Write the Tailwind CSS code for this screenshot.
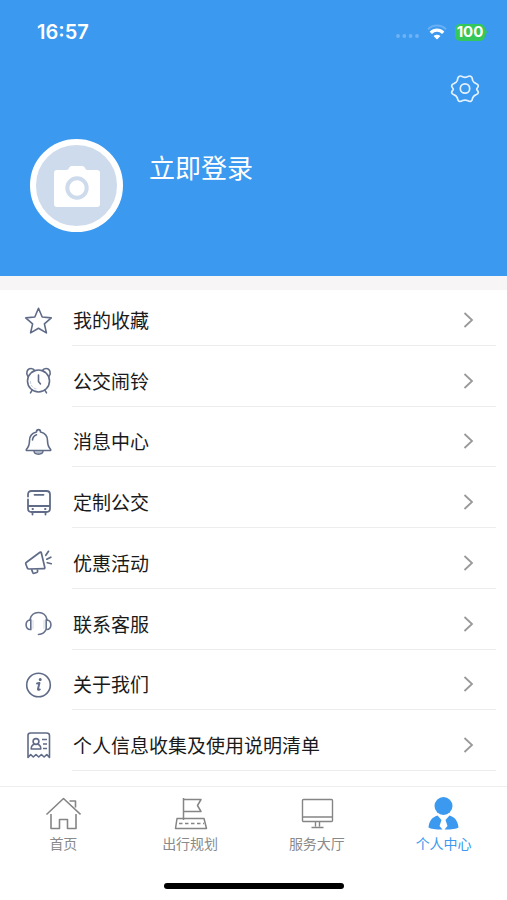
<!DOCTYPE html>
<html lang="zh-CN">
<head>
  <meta charset="UTF-8">
  <meta name="viewport" content="width=device-width, initial-scale=1.0">
  <title>个人中心</title>
  <script src="https://cdn.jsdelivr.net/npm/@tailwindcss/browser@4"></script>
</head>
<body class="bg-white font-['Noto_Sans_CJK_SC',sans-serif] text-[#1a1a1a]">
  <div class="flex min-h-screen flex-col">

    <!-- Header -->
    <header class="bg-[#3b99f0] pb-11 text-white">
      <div class="flex h-16 items-center justify-between pr-5 pl-[37px] font-[Inter,sans-serif]">
        <time class="text-[20px] font-semibold">16:57</time>
        <div class="flex items-center gap-2">
          <svg class="mt-2 h-1 w-6" viewBox="0 0 24 4" fill="#6fb3f5">
            <circle cx="3" cy="2" r="1.900"/><circle cx="9.300" cy="2" r="1.900"/><circle cx="15.600" cy="2" r="1.900"/><circle cx="22" cy="2" r="1.900"/>
          </svg>
          <svg class="h-4 w-5" viewBox="0 0 20 16" fill="none">
            <path d="M1 5.200C6 .2 14 .2 19 5.200" stroke="#69aff4" stroke-width="2"/>
            <path d="M3.800 8.800c3.500-3.700 8.900-3.700 12.400 0" stroke="#fff" stroke-width="3.200"/>
            <path d="M10 15.500 6.500 12c2-1.800 5-1.800 7 0z" fill="#fff"/>
          </svg>
          <div class="flex items-center">
            <span class="flex h-[17px] w-[30px] items-center justify-center rounded-[5px] bg-[#34c759] text-[15px] font-bold">100</span>
            <span class="h-1 w-[2px] rounded-r bg-[#34c759]"></span>
          </div>
        </div>
      </div>
      <div class="flex justify-end pt-2 pr-[26px]">
        <button type="button" aria-label="设置" class="h-8 w-8">
          <svg class="h-8 w-8" viewBox="0 0 32 32" fill="none" stroke="#e4f2ff" stroke-width="1.700" stroke-linejoin="round">
            <path d="M10 4.500c1.500-1.200 2.600-.2 3.600.3 1.700.8 3.100.8 4.800 0 1-.5 2.100-1.500 3.600-.3 1.700 1 1.200 2.700 1.700 4 .7 1.600 1.500 2.300 3.100 2.900 1.300.5 2.700 1 2.500 2.800-.2 1.500-1.600 2.100-1.600 3s1.400 1.500 1.600 3c.2 1.800-1.200 2.200-2.500 2.700-1.600.6-2.400 1.300-3.100 2.900-.5 1.200 0 2.400-1.700 3.400-1.500.8-2.600-.1-3.600-.6-1.700-.8-3.100-.8-4.800 0-1 .5-2.100 1.400-3.600.6-1.700-1-1.200-2.200-1.700-3.400-.7-1.600-1.500-2.300-3.100-2.900-1.300-.5-2.700-.9-2.500-2.700.2-1.500 1.600-2.100 1.600-3s-1.400-1.500-1.600-3c-.2-1.800 1.200-2.300 2.500-2.800 1.600-.6 2.400-1.300 3.100-2.900.5-1.300 0-3 1.700-4z"/>
            <circle cx="16" cy="16.500" r="4.700"/>
          </svg>
        </button>
      </div>
      <div class="flex gap-[26px] pt-[35px] pl-[30px]">
        <div class="flex h-[93px] w-[93px] items-center justify-center rounded-full border-6 border-white bg-[#cedbec]">
          <svg class="h-[42px] w-[46px]" viewBox="0 0 46 42">
            <path d="M3 5h9.500c2.500 0 2.500-4 5-4h11c2.500 0 2.500 4 5 4H43q3 0 3 3v31q0 3-3 3H3q-3 0-3-3V8q0-3 3-3z" fill="#fff"/>
            <circle cx="23" cy="23" r="9.700" fill="#fff" stroke="#cedbec" stroke-width="4"/>
          </svg>
        </div>
        <a href="#" class="mt-[10px] h-9 text-[26px] leading-9">立即登录</a>
      </div>
    </header>

    <div class="h-[14px] bg-[#f7f5f6]"></div>

    <!-- Menu -->
    <ul class="flex flex-1 flex-col justify-between pt-[5px] pr-[11px] pb-[15px] text-[19px] leading-7">
      <li>
        <a href="#" class="flex items-center gap-5 pl-6">
          <svg class="h-7 w-7" viewBox="0 0 28 28" fill="none" stroke="#5f6b87" stroke-width="1.600" stroke-linejoin="round">
            <path d="m14.500 1.300 3.700 8.700 9.100.9-6.900 6 2 9-7.900-4.700-7.900 4.700 2-9-6.900-6 9.100-.9z"/>
          </svg>
          <span class="flex h-[51px] flex-1 items-center justify-between border-b border-[#ececec] pr-[22px] pl-px">我的收藏
            <svg class="h-4 w-[11px]" viewBox="0 0 11 16" fill="none" stroke="#999" stroke-width="1.800"><path d="m1.500 1 7.500 7-7.500 7"/></svg>
          </span>
        </a>
      </li>
      <li>
        <a href="#" class="flex items-center gap-5 pl-6">
          <svg class="h-7 w-7" viewBox="0 0 28 28" fill="none" stroke="#5f6b87" stroke-width="1.600" stroke-linecap="round">
            <circle cx="14.500" cy="14" r="11"/>
            <path d="M4 9.500C1.400 6.200 3.200 1.500 7 1.500c1.700 0 3 .8 3.800 2.200l-2.600 1.200M25 9.500c2.600-3.300.8-8-3-8-1.700 0-3 .8-3.800 2.200l2.600 1.200M8 23.300l-1.500 2.500M21 23.300l1.500 2.500M14.500 8v6.500l2 2.500"/>
            <path d="M6.500 14.500c0 4 2.700 7 6 7.500" stroke="#c2cad9" stroke-width="1" stroke-dasharray="2 2"/>
          </svg>
          <span class="flex h-[51px] flex-1 items-center justify-between border-b border-[#ececec] pr-[22px] pl-px">公交闹铃
            <svg class="h-4 w-[11px]" viewBox="0 0 11 16" fill="none" stroke="#999" stroke-width="1.800"><path d="m1.500 1 7.500 7-7.500 7"/></svg>
          </span>
        </a>
      </li>
      <li>
        <a href="#" class="flex items-center gap-5 pl-6">
          <svg class="h-7 w-7" viewBox="0 0 28 28" fill="none" stroke="#5f6b87" stroke-width="1.600" stroke-linecap="round" stroke-linejoin="round">
            <path d="M12.500 4c0-3.200 4-3.200 4 0 4.700 1.200 7 4.500 7 8.500 0 5 1.300 7 3 8.700.6.700.2 1.300-.5 1.300H3c-.7 0-1.100-.6-.5-1.300 1.700-1.700 3-3.700 3-8.700 0-4 2.300-7.300 7-8.500zM10 23c.5 4.200 8.500 4.200 9 0"/>
            <path d="M8.500 12c.2-2.800 1.700-4.500 4-5.300"/>
            <path d="M11.500 24h6" stroke="#9ca6b9"/>
          </svg>
          <span class="flex h-[51px] flex-1 items-center justify-between border-b border-[#ececec] pr-[22px] pl-px">消息中心
            <svg class="h-4 w-[11px]" viewBox="0 0 11 16" fill="none" stroke="#999" stroke-width="1.800"><path d="m1.500 1 7.500 7-7.500 7"/></svg>
          </span>
        </a>
      </li>
      <li>
        <a href="#" class="flex items-center gap-5 pl-6">
          <svg class="h-7 w-7" viewBox="0 0 28 28" fill="none" stroke="#5f6b87" stroke-width="1.800" stroke-linecap="round">
            <path d="M4 7.500V5.500Q4 2 7.500 2h15Q26 2 26 5.500v14q0 3.500-3.500 3.500h-15Q4 23 4 19.500v-9M4 17h22M10.500 5.800h9M8.500 23.500v2M21.500 23.500v2"/>
            <path d="M8.500 20h.5M21 20h.5"/>
          </svg>
          <span class="flex h-[51px] flex-1 items-center justify-between border-b border-[#ececec] pr-[22px] pl-px">定制公交
            <svg class="h-4 w-[11px]" viewBox="0 0 11 16" fill="none" stroke="#999" stroke-width="1.800"><path d="m1.500 1 7.500 7-7.500 7"/></svg>
          </span>
        </a>
      </li>
      <li>
        <a href="#" class="flex items-center gap-5 pl-6">
          <svg class="h-7 w-7" viewBox="0 0 28 28" fill="none" stroke="#5f6b87" stroke-width="1.700" stroke-linecap="round" stroke-linejoin="round">
            <path d="M16 3.200q1-.5 1.300.6l3.500 14.700q.2 1.200-1 1.200L5 20q-1.200 0-1.700-1l-1.400-3.700q-.5-1.300.6-2zM7.500 20.200 8.800 23.600q.4.900 1.400.6l2.500-.7q1-.4.900-1.400l-.2-2M21.800 6.300l2.700-4M22.800 10.200l4-2M23.300 13.700l4 1"/>
          </svg>
          <span class="flex h-[51px] flex-1 items-center justify-between border-b border-[#ececec] pr-[22px] pl-px">优惠活动
            <svg class="h-4 w-[11px]" viewBox="0 0 11 16" fill="none" stroke="#999" stroke-width="1.800"><path d="m1.500 1 7.500 7-7.500 7"/></svg>
          </span>
        </a>
      </li>
      <li>
        <a href="#" class="flex items-center gap-5 pl-6">
          <svg class="h-7 w-7" viewBox="0 0 28 28" fill="none" stroke="#66728c" stroke-width="1.600" stroke-linecap="round">
            <path d="M6 9.500C7 5 10.500 2.500 14.500 2.500S22 5 23 9.500M6.800 10v9.500C.5 20.500.5 9 6.800 10zM22.200 10v9.500c6.300 1 6.300-10.500 0-9.500zM22 19.500c-1.200 3-3.500 4.800-7.500 5"/>
            <path d="M9 10.500V18.500M20 10.500V18.500" stroke="#d3d9e3" stroke-width="1"/>
          </svg>
          <span class="flex h-[51px] flex-1 items-center justify-between border-b border-[#ececec] pr-[22px] pl-px">联系客服
            <svg class="h-4 w-[11px]" viewBox="0 0 11 16" fill="none" stroke="#999" stroke-width="1.800"><path d="m1.500 1 7.500 7-7.500 7"/></svg>
          </span>
        </a>
      </li>
      <li>
        <a href="#" class="flex items-center gap-5 pl-6">
          <svg class="h-7 w-7" viewBox="0 0 28 28" fill="none" stroke="#5f6b87" stroke-width="1.600" stroke-linecap="round" stroke-linejoin="round">
            <circle cx="14.500" cy="14" r="11.800"/>
            <path d="m13 12.500 2.500-.6-1.600 6.300q-.1 1.200 1.900.2" stroke-width="1.900"/>
            <circle cx="16.200" cy="8.500" r=".7" fill="#5f6b87"/>
          </svg>
          <span class="flex h-[51px] flex-1 items-center justify-between border-b border-[#ececec] pr-[22px] pl-px">关于我们
            <svg class="h-4 w-[11px]" viewBox="0 0 11 16" fill="none" stroke="#999" stroke-width="1.800"><path d="m1.500 1 7.500 7-7.500 7"/></svg>
          </span>
        </a>
      </li>
      <li>
        <a href="#" class="flex items-center gap-5 pl-6">
          <svg class="h-7 w-7" viewBox="0 0 28 28" fill="none" stroke="#5f6b87" stroke-width="1.600" stroke-linejoin="round">
            <path d="M4 26.500V4.500Q4 2 6.500 2h16Q25.500 2 25.500 4.500v22l-2.700-3-2.700 2.500-2.700-2.500-2.700 2.500-2.700-2.500L9.300 26l-2.600-2.500z"/>
            <circle cx="12" cy="10.500" r="2.900"/>
            <path d="M10 13.500c-2 .4-2.800 1.700-2.800 4.500h9.600c0-2.800-.8-4.100-2.800-4.500M18 8.500h5M19 13h4M19 17.500h4"/>
          </svg>
          <span class="flex h-[51px] flex-1 items-center justify-between border-b border-[#ececec] pr-[22px] pl-px">个人信息收集及使用说明清单
            <svg class="h-4 w-[11px]" viewBox="0 0 11 16" fill="none" stroke="#999" stroke-width="1.800"><path d="m1.500 1 7.500 7-7.500 7"/></svg>
          </span>
        </a>
      </li>
    </ul>

    <!-- Tab bar -->
    <footer class="border-t border-[#eeeeee] pb-[11px]">
      <nav class="grid grid-cols-4 pt-2 text-[14px] leading-5 text-[#8a8a8a]">
        <a href="#" class="flex flex-col items-center gap-[2px]">
          <svg class="h-9 w-9" viewBox="0 0 36 36" fill="none" stroke="#858585" stroke-width="1.600" stroke-linejoin="round">
            <path d="M1.500 19.500 18.500 3.500l17 16M6 19v14.500h8.500V24.500h8v9H31V19M24.500 6h6v6.500"/>
          </svg>
          <span>首页</span>
        </a>
        <a href="#" class="flex flex-col items-center gap-[2px]">
          <svg class="h-9 w-9" viewBox="0 0 36 36" fill="none" stroke="#858585" stroke-width="1.500" stroke-linejoin="round">
            <path d="M11.500 25V3M11.500 4.500H29L25.500 10.500l3.500 6H11.500M5 23.500h27l2.500 10h-31z"/>
            <path d="M7 28.500h25" stroke-dasharray="3.500 2.500"/>
          </svg>
          <span>出行规划</span>
        </a>
        <a href="#" class="flex flex-col items-center gap-[2px]">
          <svg class="h-9 w-9" viewBox="0 0 36 36" fill="none" stroke="#858585" stroke-width="1.400" stroke-linejoin="round">
            <path d="M4.500 4.500h28a1 1 0 0 1 1 1v20a1 1 0 0 1-1 1h-28a1 1 0 0 1-1-1v-20a1 1 0 0 1 1-1zM3.500 22h30M16.500 26.500v5M20.500 26.500v5M12.500 32.500h12"/>
          </svg>
          <span>服务大厅</span>
        </a>
        <a href="#" aria-current="page" class="flex flex-col items-center gap-[2px] text-[#3b99f0]">
          <svg class="h-9 w-9" viewBox="0 0 36 36" fill="#3b99f0">
            <circle cx="17.500" cy="11" r="9"/>
            <path d="M11.500 20.500 15.500 25 13.500 31 16.500 34.500C9 34.500 5 34 2.500 32.500c.5-6 3.500-10.500 9-12zM23.500 20.500 19.500 25l2 6-3 3.500c7.500 0 11.500-.5 14-2-.5-6-3.500-10.500-9-12z"/>
          </svg>
          <span>个人中心</span>
        </a>
      </nav>
      <div class="mx-auto mt-[30px] h-[6px] w-[180px] rounded-full bg-black"></div>
    </footer>

  </div>
</body>
</html>
